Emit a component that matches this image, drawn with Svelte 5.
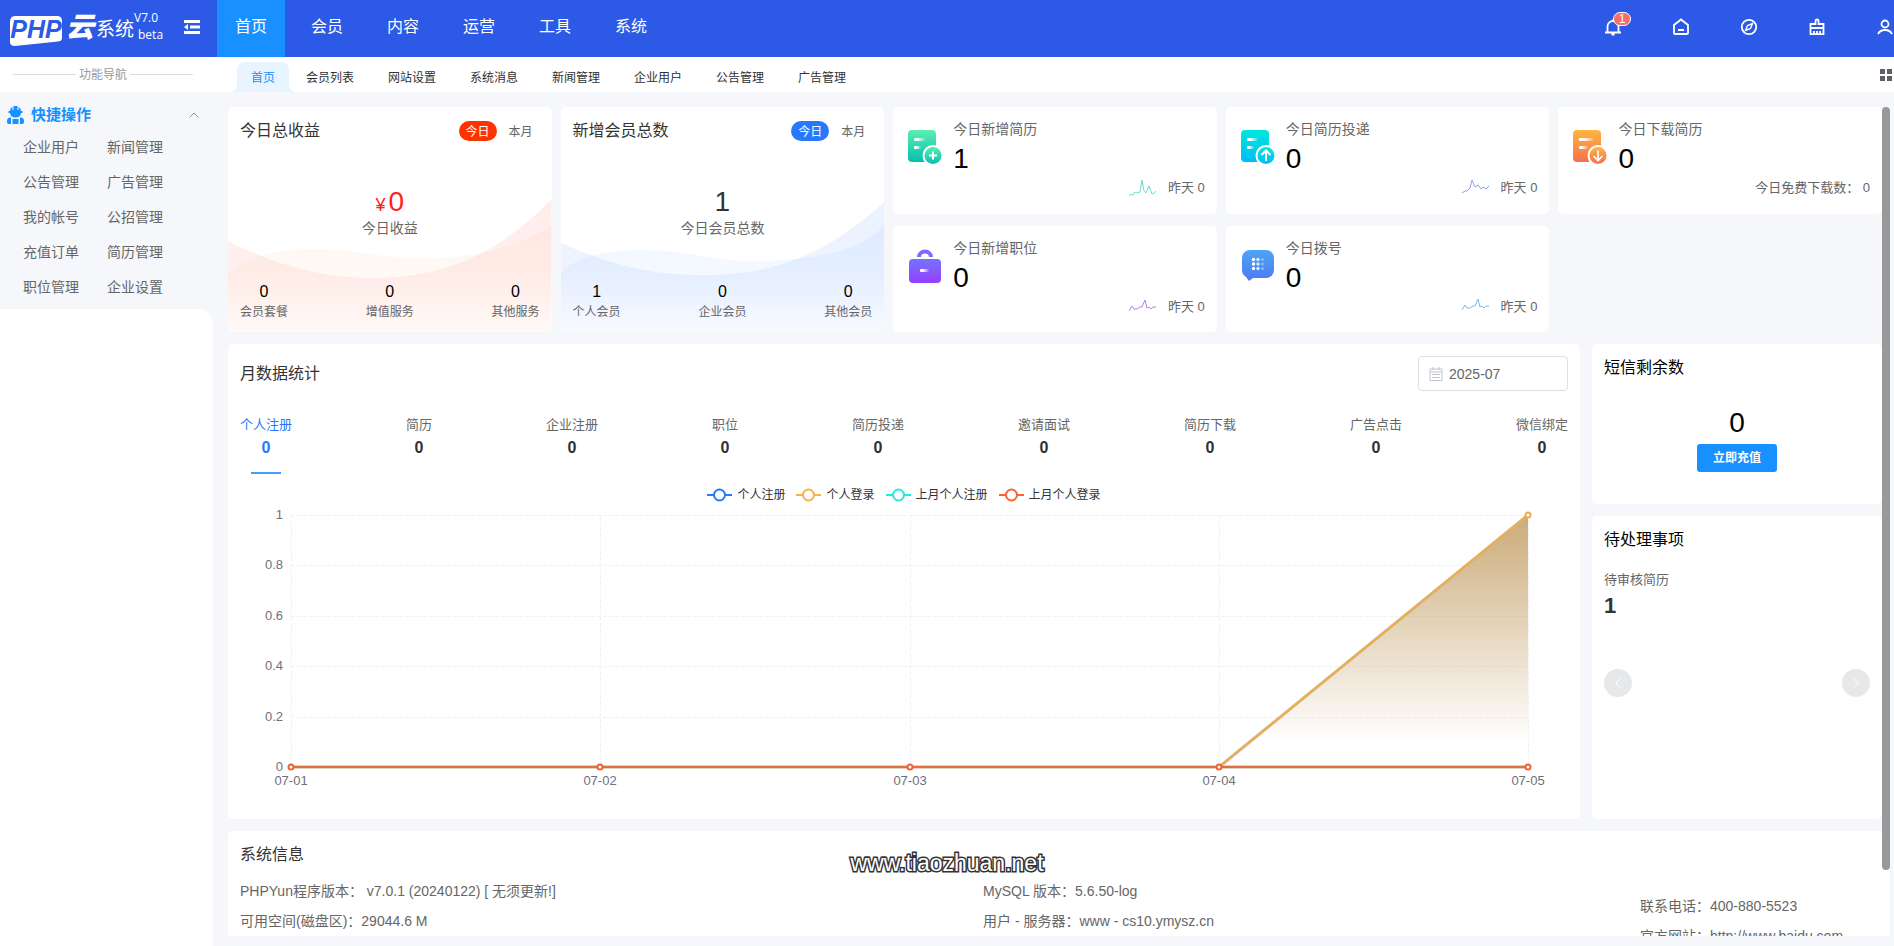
<script lang="ts">
	type Stat = { key: string; title: string; value: number; spark?: string; color?: string; note: string };

	const menus = ['首页', '会员', '内容', '运营', '工具', '系统'];
	const tabs = ['首页', '会员列表', '网站设置', '系统消息', '新闻管理', '企业用户', '公告管理', '广告管理'];
	const shortcuts = [
		'企业用户', '新闻管理', '公告管理', '广告管理', '我的帐号',
		'公招管理', '充值订单', '简历管理', '职位管理', '企业设置'
	];

	const totals = [
		{
			theme: 'red', title: '今日总收益', unit: '¥', value: 0, label: '今日收益',
			front: 'M0 134C50 159 95 171 145 171C215 171 270 148 324 92V225H0Z',
			back: 'M0 165C28 145 58 142 92 142C130 143 155 151 192 151C245 152 290 140 324 119V225H0Z',
			items: [['会员套餐', 0], ['增值服务', 0], ['其他服务', 0]]
		},
		{
			theme: 'blue', title: '新增会员总数', unit: '', value: 1, label: '今日会员总数',
			front: 'M0 136C50 158 90 168 140 168C215 168 265 148 324 95V225H0Z',
			back: 'M0 165C20 147 50 143 85 143C130 144 150 154 190 154C250 154 300 145 324 118V225H0Z',
			items: [['个人会员', 1], ['企业会员', 0], ['其他会员', 0]]
		}
	];

	const stats: Stat[] = [
		{ key: 'resume', title: '今日新增简历', value: 1, color: '#6fdcd4', note: '昨天 0', spark: '0,17 2,15 4,16 6,13 8,14 11,13 13,1 15,12 17,14 20,7 23,15 25,14 27,12' },
		{ key: 'send', title: '今日简历投递', value: 0, color: '#8b9df5', note: '昨天 0', spark: '0,14 3,12 5,12 8,9 10,1 13,8 16,6 19,10 21,8 24,10 27,7' },
		{ key: 'down', title: '今日下载简历', value: 0, note: '今日免费下载数： 0' },
		{ key: 'job', title: '今日新增职位', value: 0, color: '#b07ff0', note: '昨天 0', spark: '0,13 3,8 5,11 8,11 11,9 13,9 16,2 18,10 20,9 22,11 24,9 27,9' },
		{ key: 'phone', title: '今日拨号', value: 0, color: '#76bdf5', note: '昨天 0', spark: '0,12 3,7 5,10 8,10 11,8 13,8 16,1 18,9 20,8 22,10 24,8 27,8' }
	];

	const monthTabs = ['个人注册', '简历', '企业注册', '职位', '简历投递', '邀请面试', '简历下载', '广告点击', '微信绑定'];
	const legend = [
		{ name: '个人注册', color: '#2878ff' },
		{ name: '个人登录', color: '#f5b14c' },
		{ name: '上月个人注册', color: '#26ebdc' },
		{ name: '上月个人登录', color: '#fa6333' }
	];
	const days = ['07-01', '07-02', '07-03', '07-04', '07-05'];
	const ticks = ['1', '0.8', '0.6', '0.4', '0.2', '0'];

	let chartWidth = $state(1328);
	let left = 51;
	let bottom = 262;
	let top = 10;
	let step = $derived((chartWidth - left - 40) / 4);
	let x = $derived(days.map((_, i) => Math.round(left + i * step)));
	const y = ticks.map((_, i) => Math.round(top + (i * (bottom - top)) / 5));
</script>

{#snippet statIcon(key: string)}
	<svg class="stat-icon" viewBox="0 0 34 34" aria-hidden="true">
		<defs>
			<linearGradient id="g-{key}" x1="0" y1="0" x2="0" y2="1">
				<stop offset="0" class="{key}-a" />
				<stop offset="1" class="{key}-b" />
			</linearGradient>
			<linearGradient id="f-{key}" x1="0" y1="0" x2="1" y2="0">
				<stop offset="0.3" stop-color="#fff" />
				<stop offset="1" stop-color="#fff" stop-opacity="0.1" />
			</linearGradient>
		</defs>
		{#if key == 'job'}
			<path d="M11 8a6 5.500 0 0 1 12 0" fill="none" stroke="#7a6cff" stroke-width="4" />
			<rect x="1" y="10" width="32" height="24" rx="4" fill="url(#g-job)" />
			<rect x="12" y="20" width="9" height="3" rx="1" fill="url(#f-job)" />
		{:else if key == 'phone'}
			<path d="M9 1h16a8 8 0 0 1 8 8v12a8 8 0 0 1-8 8H12l-4 3-3-4a8 8 0 0 1-4-7V9a8 8 0 0 1 8-8z" fill="url(#g-phone)" />
			{#each [10.5, 15, 19.5] as cy}
				<circle cx="12.5" {cy} r="1.7" fill="#fff" />
				<circle cx="17" {cy} r="1.7" fill="#fff" opacity=".8" />
				<circle cx="21.5" {cy} r="1.5" fill="#fff" opacity=".35" />
			{/each}
		{:else}
			<rect width="28" height="32" rx="4" fill="url(#g-{key})" />
			<rect x="6" y="8" width={key == 'down' ? 15 : 11} height="3" rx="1" fill="url(#f-{key})" />
			<rect x="6" y="16" width={key == 'down' ? 9 : 7} height="3" rx="1" fill="url(#f-{key})" />
			<circle cx="25" cy="25.5" r="10.5" fill="#fff" />
			<circle cx="25" cy="25.5" r="8.5" fill="url(#g-{key})" />
			{#if key == 'resume'}
				<path d="M25 21.5v8M21 25.5h8" stroke="#fff" stroke-width="2" />
			{:else if key == 'send'}
				<path d="M25 31v-10M20.500 25l4.500-4.500 4.500 4.500" fill="none" stroke="#fff" stroke-width="2" />
			{:else}
				<path d="M25 20.500v10M20.500 26l4.500 4.500 4.500-4.500" fill="none" stroke="#fff" stroke-width="1.700" />
			{/if}
		{/if}
	</svg>
{/snippet}

<div class="page">
	<header class="header">
		<div class="logo">
			<span class="logo-php">
				<svg viewBox="0 0 52 31" aria-hidden="true"><path d="M5 1h42q5 0 5 5v17q0 3-4 3.500L5 31q-5 0-5-4V7q0-6 5-6z" fill="#fff" /></svg>
				<b>PHP</b>
			</span>
			<span class="logo-yun">云</span>
			<span class="logo-name">系统</span>
			<span class="logo-version"><span>V7.0</span><span class="beta">beta</span></span>
		</div>
		<button class="icon-btn fold" aria-label="收起">
			<svg viewBox="0 0 16 14"><path d="M0 0h16v3H0zM6 5.500h10v3H6zM0 11h16v3H0zM4 4v6L0 7z" fill="#fff" /></svg>
		</button>
		<nav class="menu">
			{#each menus as m, i}
				<a href="#menu-{i}" class:active={i == 0}>{m}</a>
			{/each}
		</nav>
		<div class="tools">
			<button class="icon-btn" aria-label="消息">
				<svg viewBox="0 0 18 18"><path d="M1 14.500h16M3.500 14V8.500a5.500 5.500 0 0 1 11 0V14M9 3V1.500M7.500 16.500h3" /></svg>
				<span class="badge">1</span>
			</button>
			<button class="icon-btn" aria-label="首页">
				<svg viewBox="0 0 18 18"><path d="M2 7l7-5.500L16 7v8q0 1-1 1H3q-1 0-1-1zM6 12h6" /></svg>
			</button>
			<button class="icon-btn" aria-label="浏览">
				<svg viewBox="0 0 18 18"><circle cx="9" cy="9" r="7.200" /><path d="M12.500 5.500l-2 5-5 2 2-5z" stroke-width="1.400" /></svg>
			</button>
			<button class="icon-btn" aria-label="清除缓存">
				<svg viewBox="0 0 18 18"><path d="M7.500 6V3q0-1.500 1.500-1.500T10.500 3v3H15.500v10.200H2.500V6zM2.500 10h13M6 16v-3M9 16v-3M12 16v-3" /></svg>
			</button>
			<button class="icon-btn" aria-label="用户">
				<svg viewBox="0 0 18 18"><circle cx="9" cy="6" r="3.500" /><path d="M2 16q2-4 7-4t7 4" /></svg>
			</button>
		</div>
	</header>

	<div class="subbar">
		<div class="nav-title"><span>功能导航</span></div>
		<nav class="tabs">
			{#each tabs as t, i}
				<a href="#tab-{i}" class:active={i == 0}>{t}</a>
			{/each}
		</nav>
		<button class="icon-btn grid-btn" aria-label="全部标签">
			<svg viewBox="0 0 12 12"><path d="M0 0h5v5H0zM7 0h5v5H7zM0 7h5v5H0zM7 7h5v5H7z" fill="#5c6068" /></svg>
		</button>
	</div>

	<div class="body">
		<aside class="side">
			<div class="quick">
				<button class="quick-title">
					<svg class="worker" viewBox="0 0 17 18" aria-hidden="true">
						<path d="M1.500 5H3q0-3 2.500-4v3h1V0h4v4h1V1Q14 2 14 5h1.500v2H14q-.5 4.500-5.500 4.500T3 7H1.500zM0 15q0-3 2.500-3.500H4V18H2q-2 0-2-2zM13 11.500h1.500Q17 12 17 15v1q0 2-2 2h-2zM5.500 13h6v5h-6z" fill="#1890ff" />
					</svg>
					<span>快捷操作</span>
					<svg class="chevron" viewBox="0 0 10 6" aria-hidden="true"><path d="M.5 5.500L5 1l4.500 4.500" fill="none" stroke="#909399" /></svg>
				</button>
				<div class="quick-list">
					{#each shortcuts as s, i}
						<a href="#quick-{i}">{s}</a>
					{/each}
				</div>
			</div>
			<div class="side-blank"></div>
		</aside>

		<main class="main">
			<div class="content">
				<section class="overview">
					{#each totals as t}
						<div class="card total {t.theme}">
							<svg class="wave" viewBox="0 0 324 225" preserveAspectRatio="none" aria-hidden="true">
								<defs>
									<linearGradient id="wave-{t.theme}" x1="0" y1="90" x2="0" y2="225" gradientUnits="userSpaceOnUse">
										<stop offset="0" class="wave-stop" stop-opacity=".1" />
										<stop offset=".6" class="wave-stop" stop-opacity=".08" />
										<stop offset="1" class="wave-stop" stop-opacity=".02" />
									</linearGradient>
									<linearGradient id="wave2-{t.theme}" x1="0" y1="118" x2="0" y2="225" gradientUnits="userSpaceOnUse">
										<stop offset="0" class="wave-stop2" stop-opacity=".07" />
										<stop offset="1" class="wave-stop2" stop-opacity=".02" />
									</linearGradient>
								</defs>
								<path d={t.front} fill="url(#wave-{t.theme})" />
								<path d={t.back} fill="url(#wave2-{t.theme})" />
							</svg>
							<div class="total-head">
								<h2>{t.title}</h2>
								<button class="pill on">今日</button>
								<button class="pill">本月</button>
							</div>
							<div class="total-value">{#if t.unit}<small>{t.unit}</small>{/if}{t.value}</div>
							<div class="total-label">{t.label}</div>
							<div class="total-foot">
								{#each t.items as [name, n]}
									<div><b>{n}</b><span>{name}</span></div>
								{/each}
							</div>
						</div>
					{/each}
					{#each stats as s}
						<div class="card stat">
							<div class="stat-head">
								{@render statIcon(s.key)}
								<div>
									<div class="stat-title">{s.title}</div>
									<div class="big">{s.value}</div>
								</div>
							</div>
							<div class="stat-foot">
								{#if s.spark}
									<svg class="spark" viewBox="0 0 27 18" aria-hidden="true">
										<polyline points={s.spark} fill="none" stroke={s.color} />
									</svg>
								{/if}
								<span>{s.note}</span>
							</div>
						</div>
					{/each}
				</section>

				<section class="middle">
					<div class="card month">
						<div class="month-head">
							<h2>月数据统计</h2>
							<label class="picker">
								<svg viewBox="0 0 14 14" aria-hidden="true"><path d="M1 2h12v11.500H1zM1 5h12M4 0v3M10 0v3M3 7.500h8M3 10.500h8" fill="none" stroke="#c0c4cc" /></svg>
								<input type="text" value="2025-07" aria-label="月份" />
							</label>
						</div>
						<div class="month-tabs">
							{#each monthTabs as m, i}
								<button class:active={i == 0}>
									<span>{m}</span>
									<b>0</b>
								</button>
							{/each}
						</div>
						<div class="legend">
							{#each legend as l}
								<span class="legend-item">
									<svg viewBox="0 0 25 14" aria-hidden="true">
										<path d="M0 7h25" stroke={l.color} stroke-width="2" />
										<circle cx="12.500" cy="7" r="5.500" fill="#fff" stroke={l.color} stroke-width="2" />
									</svg>
									{l.name}
								</span>
							{/each}
						</div>
						<div class="chart" bind:clientWidth={chartWidth}>
							<svg width={chartWidth} height="302" role="img" aria-label="月数据统计">
								<defs>
									<linearGradient id="area" x1="0" y1="0" x2="0" y2="1">
										<stop offset="0" stop-color="#cbab79" />
										<stop offset=".9" stop-color="#cbab79" stop-opacity="0" />
									</linearGradient>
								</defs>
								<g class="grid-lines">
									{#each y.slice(0, 5) as ty}
										<line x1={left} x2={x[4]} y1={ty + 0.5} y2={ty + 0.5} />
									{/each}
									{#each x as tx}
										<line x1={tx + 0.5} x2={tx + 0.5} y1={top} y2={bottom} />
									{/each}
								</g>
								<path d="M{x[3]} {bottom}L{x[4]} {top}V{bottom}z" fill="url(#area)" />
								<path d="M{x[3]} {bottom}L{x[4]} {top}" stroke="#bdb8a8" stroke-width="3" fill="none" />
								<path d="M{x[3]} {bottom}L{x[4]} {top}" stroke="#f0ae4b" stroke-width="2" fill="none" />
								<path d="M{x[0]} {bottom}H{x[4]}" stroke="#b9ac88" stroke-width="3" />
								<path d="M{x[0]} {bottom}H{x[4]}" stroke="#e0703f" stroke-width="2" />
								<circle cx={x[4]} cy={top} r="2.500" fill="#fff" stroke="#f0ae4b" stroke-width="2" />
								{#each x as tx, i}
									<circle cx={tx} cy={bottom} r="2.500" fill="#fff" stroke="#ee633a" stroke-width="2" />
									<text x={tx} y="280" text-anchor="middle">{days[i]}</text>
								{/each}
								{#each ticks as t, i}
									<text x={left - 8} y={y[i] + 4} text-anchor="end">{t}</text>
								{/each}
							</svg>
						</div>
					</div>
					<div class="right">
						<div class="card sms">
							<h2>短信剩余数</h2>
							<div class="big">0</div>
							<button class="charge">立即充值</button>
						</div>
						<div class="card todo">
							<h2>待处理事项</h2>
							<div class="todo-label">待审核简历</div>
							<div class="todo-value">1</div>
							<div class="arrows">
								<button aria-label="上一个"><svg viewBox="0 0 6 10"><path d="M5 .5L1 5l4 4.500" /></svg></button>
								<button aria-label="下一个"><svg viewBox="0 0 6 10"><path d="M1 .5L5 5 1 9.500" /></svg></button>
							</div>
						</div>
					</div>
				</section>

				<section class="card system">
					<h2>系统信息</h2>
					<div class="system-info">
						<div>
							<p>PHPYun程序版本： v7.0.1 (20240122) [ 无须更新!]</p>
							<p>可用空间(磁盘区)：29044.6 M</p>
						</div>
						<div>
							<p>MySQL 版本：5.6.50-log</p>
							<p>用户 - 服务器：www - cs10.ymysz.cn</p>
						</div>
						<div class="contact">
							<p>联系电话：400-880-5523</p>
							<p>官方网站：http://www.baidu.com</p>
						</div>
					</div>
				</section>
			</div>
			<div class="scrollbar"><div class="thumb"></div></div>
		</main>
	</div>
	<div class="watermark">www.tiaozhuan.net</div>
</div>

<style>
	:global(body) {
		margin: 0;
	}
	.page {
		position: relative;
		height: 100vh;
		display: flex;
		flex-direction: column;
		overflow: hidden;
		background: #f5f7fb;
		color: #666;
		font: 14px/20px "Liberation Sans", "Noto Sans CJK SC", sans-serif;
	}
	.page * {
		box-sizing: border-box;
	}
	button,
	input {
		font: inherit;
		color: inherit;
		border: 0;
		padding: 0;
		background: none;
	}
	a {
		color: inherit;
		text-decoration: none;
	}
	h2 {
		margin: 0;
		font-size: 16px;
		line-height: 24px;
		font-weight: 400;
		color: #333;
	}
	p {
		margin: 0;
	}
	svg {
		display: block;
	}

	/* header */
	.header {
		flex: none;
		height: 57px;
		padding-bottom: 3px;
		display: flex;
		align-items: center;
		background: #2c59e6;
		color: #fff;
	}
	.logo {
		width: 156px;
		margin: 0 18px 0 10px;
		padding-top: 6px;
		display: flex;
		align-items: center;
		white-space: nowrap;
	}
	.logo-php {
		position: relative;
		flex: none;
		width: 52px;
		height: 31px;
		text-align: center;
	}
	.logo-php svg {
		position: absolute;
		inset: 0;
	}
	.logo-php b {
		position: relative;
		font-size: 25px;
		line-height: 29px;
		font-style: italic;
		color: #2c59e6;
	}
	.logo-yun {
		margin-left: 4px;
		font-size: 28px;
		line-height: 30px;
		padding-bottom: 4px;
		font-weight: 900;
		font-style: italic;
	}
	.logo-name {
		margin-left: 2px;
		font-size: 19px;
		line-height: 30px;
	}
	.logo-version {
		display: flex;
		flex-direction: column;
		font-family: "Open Sans", sans-serif;
		font-size: 12px;
		line-height: 17px;
		padding-bottom: 8px;
	}
	.beta {
		padding-left: 4px;
	}
	.icon-btn {
		position: relative;
		flex: none;
		cursor: pointer;
	}
	.fold svg {
		width: 16px;
		height: 14px;
	}
	.menu {
		align-self: flex-start;
		display: flex;
		gap: 8px;
		margin-left: 17px;
		font-size: 16px;
		line-height: 53px;
	}
	.menu a {
		height: 57px;
		padding: 0 18px;
	}
	.menu a.active {
		background: #1890ff;
	}
	.tools {
		display: flex;
		gap: 50px;
		margin-left: auto;
	}
	.tools svg {
		width: 18px;
		height: 18px;
		fill: none;
		stroke: #fff;
		stroke-width: 1.8;
	}
	.badge {
		position: absolute;
		left: 9px;
		top: -6px;
		width: 18px;
		height: 14px;
		border: 1px solid #fff;
		border-radius: 7px;
		background: #f56c6c;
		font-size: 12px;
		line-height: 12px;
	}

	/* tab bar */
	.subbar {
		flex: none;
		height: 35px;
		display: flex;
		align-items: center;
		background: #fff;
		font-size: 12px;
		color: #303133;
	}
	.nav-title {
		width: 180px;
		margin: 0 44px 0 13px;
		display: flex;
		align-items: center;
		gap: 3px;
		color: #999;
	}
	.nav-title::before,
	.nav-title::after {
		content: "";
		flex: 1;
		height: 1px;
		background: #dcdcdc;
	}
	.tabs {
		flex: 1;
		display: flex;
		align-self: flex-end;
		line-height: 32px;
	}
	.tabs a {
		height: 30px;
		padding: 0 17px;
	}
	.tabs a.active {
		position: relative;
		padding: 0 14px;
		border-radius: 8px 8px 0 0;
		background: #e8f4ff;
		color: #1890ff;
	}
	.tabs a.active::before,
	.tabs a.active::after {
		content: "";
		position: absolute;
		bottom: 0;
		width: 8px;
		height: 8px;
	}
	.tabs a.active::before {
		right: 100%;
		background: radial-gradient(circle at 0 0, transparent 8px, #e8f4ff 8px);
	}
	.tabs a.active::after {
		left: 100%;
		background: radial-gradient(circle at 100% 0, transparent 8px, #e8f4ff 8px);
	}
	.grid-btn {
		margin-right: 2px;
	}
	.grid-btn svg {
		width: 12px;
		height: 12px;
	}

	/* sidebar */
	.body {
		flex: 1;
		min-height: 0;
		display: flex;
	}
	.side {
		flex: none;
		width: 213px;
		display: flex;
		flex-direction: column;
	}
	.quick {
		padding: 10px 0 4px;
	}
	.quick-title {
		width: 100%;
		height: 26px;
		margin-bottom: 2px;
		padding: 0 14px 0 7px;
		display: flex;
		align-items: center;
		gap: 7px;
		font-size: 15px;
		font-weight: 700;
		color: #1890ff;
	}
	.worker {
		width: 17px;
		height: 18px;
	}
	.chevron {
		width: 10px;
		height: 6px;
		margin-left: auto;
	}
	.quick-list {
		display: grid;
		grid-template-columns: 84px 84px;
		padding-left: 23px;
		line-height: 35px;
	}
	.side-blank {
		flex: 1;
		background: #fff;
		border-radius: 0 14px 0 0;
	}

	/* dashboard */
	.main {
		flex: 1;
		min-width: 0;
		display: flex;
		margin: 15px 4px 10px 15px;
		overflow: hidden;
	}
	.content {
		flex: 1;
		min-width: 0;
		display: flex;
		flex-direction: column;
		gap: 12px;
	}
	.scrollbar {
		flex: none;
		width: 8px;
		background: linear-gradient(transparent 90%, #fff 90%);
		border-radius: 4px;
	}
	.thumb {
		height: 92%;
		border-radius: 4px;
		background: #999;
	}
	.card {
		border-radius: 5px;
		background: #fff;
	}
	.overview {
		flex: none;
		display: grid;
		grid-template-columns: repeat(5, minmax(0, 1fr));
		grid-template-rows: 107px 106px;
		gap: 12px 9px;
	}
	.total {
		grid-row: span 2;
		position: relative;
		overflow: hidden;
		display: flex;
		flex-direction: column;
		padding: 13px 12px 10px;
	}
	.total > div {
		position: relative;
	}
	.wave {
		position: absolute;
		left: 0;
		top: 0;
		width: 100%;
		height: 100%;
	}
	.red .wave-stop {
		stop-color: #ff4a3d;
	}
	.red .wave-stop2 {
		stop-color: #f7903c;
	}
	.blue .wave-stop,
	.blue .wave-stop2 {
		stop-color: #2f7dff;
	}
	.total-head {
		display: flex;
		align-items: center;
		gap: 5px;
		line-height: 22px;
	}
	.total-head h2 {
		flex: 1;
		line-height: 22px;
	}
	.pill {
		width: 38px;
		height: 20px;
		border-radius: 10px;
		font-size: 12px;
	}
	.red .on {
		background: #ff3300;
		color: #fff;
	}
	.blue .on {
		background: #2878ff;
		color: #fff;
	}
	.total-value {
		height: 32px;
		margin-top: 44px;
		font-size: 28px;
		line-height: 32px;
		text-align: center;
		color: #333;
	}
	.total-value small {
		margin-right: 3px;
		font-size: 18px;
	}
	.red .total-value {
		color: #ff2020;
	}
	.total-label {
		text-align: center;
	}
	.total-foot {
		display: flex;
		justify-content: space-between;
		margin-top: auto;
		text-align: center;
		font-size: 12px;
	}
	.total-foot b {
		display: block;
		font-size: 16px;
		font-weight: 400;
		color: #000;
	}
	.stat {
		padding: 11px 12px 0 15px;
	}
	.stat-head {
		display: flex;
		gap: 11px;
	}
	.stat-icon {
		width: 34px;
		height: 34px;
		margin-top: 12px;
	}
	.stat-title {
		line-height: 22px;
	}
	.big {
		font-size: 28px;
		line-height: 38px;
		color: #000;
	}
	.stat-foot {
		display: flex;
		justify-content: flex-end;
		align-items: center;
		gap: 12px;
		font-size: 13px;
	}
	.spark {
		width: 27px;
		height: 18px;
	}
	.resume-a { stop-color: #5ceeb0; }
	.resume-b { stop-color: #04c0b0; }
	.send-a { stop-color: #00e8de; }
	.send-b { stop-color: #00bdf5; }
	.down-a { stop-color: #ffb53e; }
	.down-b { stop-color: #f4704f; }
	.job-a { stop-color: #7274ff; }
	.job-b { stop-color: #983fff; }
	.phone-a { stop-color: #4da5f2; }
	.phone-b { stop-color: #4d79f2; }

	.middle {
		flex: none;
		display: grid;
		grid-template-columns: minmax(0, 1fr) 290px;
		gap: 12px;
	}
	.month {
		padding: 12px;
	}
	.month-head {
		display: flex;
		align-items: center;
		justify-content: space-between;
	}
	.picker {
		width: 150px;
		height: 35px;
		display: flex;
		align-items: center;
		gap: 6px;
		padding: 0 10px;
		border: 1px solid #dcdfe6;
		border-radius: 4px;
	}
	.picker svg {
		flex: none;
		width: 14px;
		height: 14px;
	}
	.picker input {
		min-width: 0;
		flex: 1;
	}
	.month-tabs {
		display: flex;
		justify-content: space-between;
		margin-top: 25px;
	}
	.month-tabs button {
		padding-bottom: 12px;
		font-size: 13px;
		line-height: 18px;
	}
	.month-tabs b {
		display: block;
		font-size: 16px;
		line-height: 28px;
		color: #303133;
	}
	.month-tabs .active {
		padding-bottom: 0;
	}
	.month-tabs .active,
	.month-tabs .active b {
		color: #2878ff;
	}
	.month-tabs .active::after {
		content: "";
		display: block;
		width: 30px;
		height: 2px;
		margin: 10px auto 0;
		background: #409eff;
	}
	.legend {
		display: flex;
		justify-content: center;
		gap: 11px;
		margin-top: 11px;
		font-size: 12px;
		color: #333;
	}
	.legend-item {
		display: flex;
		align-items: center;
		gap: 5px;
	}
	.legend svg {
		width: 25px;
		height: 14px;
	}
	.chart {
		height: 302px;
		overflow: hidden;
	}
	.chart text {
		font-size: 13px;
		fill: #6e7079;
	}
	.grid-lines line {
		stroke: #f0f1f2;
		stroke-dasharray: 4 2;
	}
	.right {
		display: flex;
		flex-direction: column;
		gap: 12px;
	}
	.right h2 {
		color: #000;
	}
	.sms {
		height: 160px;
		padding: 12px;
		text-align: center;
	}
	.sms h2 {
		margin-bottom: 24px;
		text-align: left;
	}
	.charge {
		width: 80px;
		height: 28px;
		margin-top: 2px;
		border-radius: 3px;
		background: #1890ff;
		color: #fff;
		font-size: 12px;
		font-weight: 700;
	}
	.todo {
		flex: 1;
		padding: 12px;
	}
	.todo-label {
		margin-top: 18px;
		font-size: 13px;
	}
	.todo-value {
		font-size: 22px;
		line-height: 32px;
		font-weight: 700;
		color: #333;
	}
	.arrows {
		display: flex;
		justify-content: space-between;
		margin-top: 47px;
	}
	.arrows button {
		width: 28px;
		height: 28px;
		border-radius: 50%;
		background: #e6e8ea;
	}
	.arrows svg {
		width: 6px;
		height: 10px;
		margin: auto;
		fill: none;
		stroke: #fff;
	}
	.system {
		flex: none;
		padding: 12px;
	}
	.system-info {
		display: grid;
		grid-template-columns: 743fr 657fr 230fr;
		margin-top: 9px;
		line-height: 30px;
	}
	.contact {
		margin-top: 15px;
	}
	.watermark {
		position: absolute;
		left: 50%;
		bottom: 68px;
		transform: translateX(-50%);
		font-size: 23px;
		line-height: 30px;
		color: #fff;
		-webkit-text-stroke: 3px #333;
		paint-order: stroke fill;
	}
</style>
